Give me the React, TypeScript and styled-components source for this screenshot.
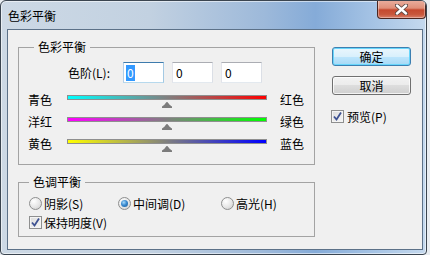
import styled, { createGlobalStyle } from 'styled-components'

const GlobalStyle = createGlobalStyle`
  html, body {
    margin: 0;
    padding: 0;
    background: #e9edf1;
  }
  body {
    font-family: "Noto Sans CJK SC", "Liberation Sans", sans-serif;
    font-size: 12px;
    color: #000;
  }
`

const sliders = [
  { left: '青色', right: '红色', from: '#00ffff', to: '#ff0000' },
  { left: '洋红', right: '绿色', from: '#ff00ff', to: '#00ff00' },
  { left: '黄色', right: '蓝色', from: '#ffff00', to: '#0000ff' },
]

function CloseIcon() {
  return (
    <svg width="13" height="11" viewBox="0 0 13 11">
      <path d="M2 1.5 L11 9.5 M11 1.5 L2 9.5" stroke="#5a4844" strokeWidth="4.2" strokeLinecap="round" />
      <path d="M2 1.5 L11 9.5 M11 1.5 L2 9.5" stroke="#ffffff" strokeWidth="2.4" strokeLinecap="round" />
    </svg>
  )
}

function ThumbIcon() {
  return (
    <svg width="10" height="6" viewBox="0 0 10 6">
      <path d="M5 0 C6 0 6.5 1.6 7.6 2.7 L10 4.6 L10 6 L0 6 L0 4.6 L2.4 2.7 C3.5 1.6 4 0 5 0 Z" fill="#7c7c7c" />
    </svg>
  )
}

function CheckBox() {
  return (
    <Check>
      <svg width="11" height="11" viewBox="0 0 11 11">
        <path d="M2 5.5 L4.5 8.5 L9 1.5" stroke="#3e5292" strokeWidth="1.8" fill="none" />
      </svg>
    </Check>
  )
}

function App() {
  return (
    <>
      <GlobalStyle />
      <Window>
        <TitleBar>
          <Title>色彩平衡</Title>
          <CloseButton>
            <CloseIcon />
          </CloseButton>
        </TitleBar>
        <Client>
          <LeftColumn>
            <Group $padBottom={3}>
              <Legend $offset={15}>色彩平衡</Legend>
              <LevelsRow>
                <LevelsLabel>色阶(L):</LevelsLabel>
                <Fields>
                  <Field $focused>
                    <Selected>0</Selected>
                  </Field>
                  <Field>
                    <Value>0</Value>
                  </Field>
                  <Field>
                    <Value>0</Value>
                  </Field>
                </Fields>
              </LevelsRow>
              <SliderList>
                {sliders.map((s) => (
                  <SliderRow key={s.left}>
                    <SideLabel>{s.left}</SideLabel>
                    <Track>
                      <Bar $from={s.from} $to={s.to} />
                      <Thumb style={{ left: '50%' }}>
                        <ThumbIcon />
                      </Thumb>
                    </Track>
                    <SideLabel>{s.right}</SideLabel>
                  </SliderRow>
                ))}
              </SliderList>
            </Group>
            <Group $padBottom={7}>
              <Legend $offset={10}>色调平衡</Legend>
              <RadioRow>
                <Option>
                  <Radio $checked={false} />
                  <span>阴影(S)</span>
                </Option>
                <Option>
                  <Radio $checked />
                  <span>中间调(D)</span>
                </Option>
                <Option>
                  <Radio $checked={false} />
                  <span>高光(H)</span>
                </Option>
              </RadioRow>
              <CheckRow>
                <CheckBox />
                <span>保持明度(V)</span>
              </CheckRow>
            </Group>
          </LeftColumn>
          <RightColumn>
            <Button $primary>确定</Button>
            <Button>取消</Button>
            <PreviewRow>
              <CheckBox />
              <span>预览(P)</span>
            </PreviewRow>
          </RightColumn>
        </Client>
      </Window>
    </>
  )
}

export default App

const Window = styled.div`
  width: 427px;
  height: 255px;
  box-sizing: border-box;
  border: 1px solid #3b4550;
  border-radius: 6px 6px 4px 4px;
  background: linear-gradient(
    90deg,
    #cdd9e5 0%,
    #c2d1e1 35%,
    #9db9da 62%,
    #85abd8 74%,
    #a6c4e5 88%,
    #c5d9ee 100%
  );
  box-shadow: inset 0 0 0 1px rgba(255, 255, 255, 0.55);
  display: flex;
  flex-direction: column;
  overflow: hidden;
`

const TitleBar = styled.div`
  height: 28px;
  flex-shrink: 0;
  display: flex;
  justify-content: space-between;
  align-items: flex-start;
`

const Title = styled.div`
  padding: 8px 0 0 7px;
  line-height: 14px;
  font-size: 12px;
`

const CloseButton = styled.div`
  width: 49px;
  height: 19px;
  margin-top: -1px;
  box-sizing: border-box;
  border: 1px solid #4a2620;
  border-top: none;
  border-radius: 0 0 4px 4px;
  background: linear-gradient(
    180deg,
    #eab0a0 0%,
    #df8f79 45%,
    #c5492f 55%,
    #c8573c 80%,
    #d9806a 100%
  );
  box-shadow: inset 0 0 0 1px rgba(255, 255, 255, 0.35);
  display: flex;
  align-items: center;
  justify-content: center;
`

const Client = styled.div`
  flex: 1;
  margin: 0 3px 4px 6px;
  border: 1px solid #5c7188;
  background: #f0f0f0;
  display: flex;
  gap: 16px;
  padding: 10px 0 0 10px;
  box-sizing: border-box;
`

const LeftColumn = styled.div`
  display: flex;
  flex-direction: column;
  gap: 10px;
  width: 297px;
`

const Group = styled.fieldset<{ $padBottom: number }>`
  margin: 0;
  padding: 0 0 ${(p) => p.$padBottom}px;
  border: 1px solid #a3a3a3;
  width: 297px;
  box-sizing: border-box;
  min-inline-size: 0;
`

const Legend = styled.legend<{ $offset: number }>`
  margin-left: ${(p) => p.$offset}px;
  padding: 0 4px;
  line-height: 14px;
  font-size: 12px;
`

const LevelsRow = styled.div`
  display: flex;
  align-items: center;
  height: 21px;
  margin-top: 8px;
  padding-left: 49px;
`

const LevelsLabel = styled.div`
  width: 55px;
  line-height: 14px;
`

const Fields = styled.div`
  display: flex;
  gap: 8px;
`

const Field = styled.div<{ $focused?: boolean }>`
  width: 41px;
  height: 21px;
  box-sizing: border-box;
  border: 1px solid;
  border-color: ${(p) =>
    p.$focused
      ? '#3d7bad #a4c9e3 #b7d9ed #b5cfe7'
      : '#abadb3 #dbdfe6 #e3e9ef #e2e3ea'};
  background: #fff;
  padding-left: 2px;
  display: flex;
  align-items: center;
`

const Value = styled.span`
  padding: 0 1px;
  line-height: 16px;
`

const Selected = styled(Value)`
  background: #3399ff;
  color: #fff;
`

const SliderList = styled.div`
  margin-top: 12px;
  display: grid;
  grid-auto-rows: 22px;
`

const SliderRow = styled.div`
  display: grid;
  grid-template-columns: 39px 200px 13px auto;
  align-items: start;
  padding-left: 9px;

  & > :last-child {
    grid-column: 4;
    white-space: nowrap;
  }
`

const SideLabel = styled.div`
  line-height: 12px;
  margin-top: -1px;
`

const Track = styled.div`
  position: relative;
  height: 13px;
`

const Bar = styled.div<{ $from: string; $to: string }>`
  height: 5px;
  box-sizing: border-box;
  border: 1px solid #8f8f8f;
  background: linear-gradient(90deg, ${(p) => p.$from}, ${(p) => p.$to});
`

const Thumb = styled.div`
  position: absolute;
  top: 7px;
  width: 10px;
  height: 6px;
  transform: translateX(-50%);
  display: flex;
`

const RadioRow = styled.div`
  display: grid;
  grid-template-columns: 89px 103px auto;
  align-items: center;
  height: 13px;
  margin-top: 8px;
  padding-left: 10px;
`

const Option = styled.div`
  display: flex;
  align-items: center;
  gap: 2px;
  line-height: 13px;
`

const Radio = styled.span<{ $checked: boolean }>`
  position: relative;
  width: 13px;
  height: 13px;
  box-sizing: border-box;
  border-radius: 50%;
  border: 1px solid #8e8f8f;
  background: radial-gradient(circle at 35% 30%, #ffffff 0%, #e6e6e6 55%, #c9c9c9 100%);
  flex-shrink: 0;

  &::after {
    content: '';
    display: ${(p) => (p.$checked ? 'block' : 'none')};
    position: absolute;
    left: 2px;
    top: 2px;
    width: 7px;
    height: 7px;
    border-radius: 50%;
    background: radial-gradient(circle at 40% 35%, #a9dcfb 0%, #3a8ad0 45%, #1c5a93 100%);
  }
`

const CheckRow = styled.div`
  display: flex;
  align-items: center;
  gap: 2px;
  height: 13px;
  margin-top: 6px;
  padding-left: 10px;
  line-height: 13px;
`

const Check = styled.span`
  width: 13px;
  height: 13px;
  box-sizing: border-box;
  border: 1px solid #8e8f8f;
  background: linear-gradient(135deg, #dcdcdc 0%, #f6f6f6 100%);
  box-shadow: inset 0 0 0 1px #f4f4f4;
  display: flex;
  align-items: center;
  justify-content: center;
  flex-shrink: 0;
`

const RightColumn = styled.div`
  display: flex;
  flex-direction: column;
  align-items: flex-start;
  margin-top: 7px;
`

const Button = styled.div<{ $primary?: boolean }>`
  width: 79px;
  height: 19px;
  margin: 0 0 10px 1px;
  box-sizing: border-box;
  border: 1px solid ${(p) => (p.$primary ? '#3c7fb1' : '#707070')};
  border-radius: 3px;
  background: ${(p) =>
    p.$primary
      ? 'linear-gradient(180deg, #eaf6fd 0%, #d9f0fc 50%, #bee6fd 50%, #a7d9f5 100%)'
      : 'linear-gradient(180deg, #f2f2f2 0%, #ebebeb 50%, #dddddd 50%, #cfcfcf 100%)'};
  box-shadow: inset 0 0 0 1px
    ${(p) => (p.$primary ? '#68d6fb' : 'rgba(255, 255, 255, 0.75)')};
  display: flex;
  align-items: center;
  justify-content: center;
  line-height: 14px;
`

const PreviewRow = styled.div`
  display: flex;
  align-items: center;
  gap: 3px;
  margin-top: 5px;
  line-height: 13px;
`
